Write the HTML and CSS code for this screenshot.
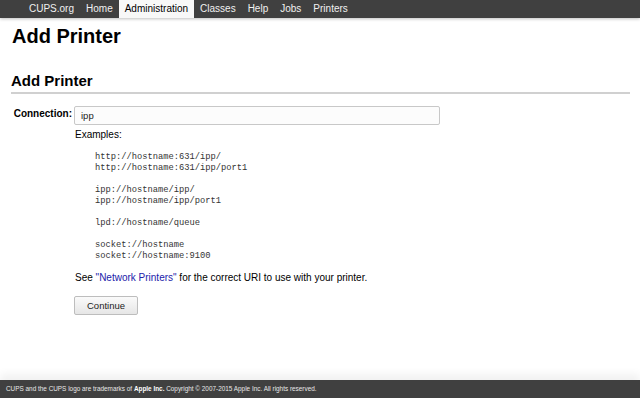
FILE: index.html
```html
<!DOCTYPE html>
<html>
<head>
<meta charset="utf-8">
<title>Add Printer - CUPS</title>
<link rel="stylesheet" href="styles.css">
</head>
<body>
<div class="page">
  <nav class="header">
    <ul class="nav">
      <li><a href="#">CUPS.org</a></li>
      <li><a href="#">Home</a></li>
      <li class="active"><a href="#">Administration</a></li>
      <li><a href="#">Classes</a></li>
      <li><a href="#">Help</a></li>
      <li><a href="#">Jobs</a></li>
      <li><a href="#">Printers</a></li>
    </ul>
  </nav>
  <main class="body">
    <h1 class="title">Add Printer</h1>
    <h2 class="section">Add Printer</h2>
    <div class="form">
      <div class="label">Connection:</div>
      <div class="field">
        <div class="input">ipp</div>
        <p class="examples">Examples:</p>
        <pre class="uris">http://hostname:631/ipp/
http://hostname:631/ipp/port1

ipp://hostname/ipp/
ipp://hostname/ipp/port1

lpd://hostname/queue

socket://hostname
socket://hostname:9100</pre>
        <p class="see">See <a href="#">"Network Printers"</a> for the correct URI to use with your printer.</p>
        <button class="button">Continue</button>
      </div>
    </div>
  </main>
  <footer class="footer">CUPS and the CUPS logo are trademarks of <b>Apple Inc.</b> Copyright © 2007-2015 Apple Inc. All rights reserved.</footer>
</div>
</body>
</html>
```
FILE: styles.css
```css
html, body {
  margin: 0;
  padding: 0;
  background: #fff;
}
body {
  font-family: "Liberation Sans", Arial, sans-serif;
  font-size: 10px;
  color: #000;
}
.page {
  display: flex;
  flex-direction: column;
  min-height: 100vh;
}
.header {
  background: #404040;
  height: 18px;
  box-shadow: 0 1px 3px rgba(0,0,0,0.25);
  position: relative;
  z-index: 1;
}
.nav {
  list-style: none;
  margin: 0;
  padding: 0 0 0 23px;
  display: flex;
  height: 18px;
}
.nav li a {
  display: block;
  height: 18px;
  line-height: 18px;
  padding: 0 6px;
  color: #f0f0f0;
  text-decoration: none;
  font-size: 10px;
}
.nav li.active a {
  background: #f8f8f8;
  color: #000;
}
.body {
  flex: 1;
  padding: 0 12px 0 12px;
}
.title {
  font-size: 20px;
  font-weight: bold;
  margin: 4px 0 0 0;
  line-height: 28px;
}
.section {
  font-size: 15px;
  font-weight: bold;
  margin: 22px -2px 0 -1px;
  padding: 0 0 2px 0;
  line-height: 18px;
  border-bottom: 2px solid #d0d0d0;
}
.form {
  display: flex;
  margin-top: 12px;
}
.label {
  width: 60px;
  text-align: right;
  font-weight: bold;
  padding-top: 2px;
  margin-left: 0;
}
.field {
  margin-left: 2px;
}
.input {
  width: 358px;
  height: 17px;
  border: 1px solid #c8c8c8;
  border-radius: 2px;
  background: #fcfcfc;
  padding: 0 0 0 6px;
  line-height: 18px;
  font-size: 9.5px;
  color: #222;
}
.examples {
  margin: 3px 0 0 1px;
  line-height: 14px;
}
.uris {
  font-family: "Liberation Mono", "Courier New", monospace;
  font-size: 8.75px;
  line-height: 11px;
  color: #333;
  margin: 10px 0 0 21px;
}
.see {
  margin: 9px 0 0 1px;
  line-height: 14px;
}
.see a {
  color: #2222aa;
  text-decoration: none;
}
.button {
  margin-top: 11px;
  width: 64px;
  height: 19px;
  font-family: "Liberation Sans", Arial, sans-serif;
  font-size: 9.5px;
  color: #222;
  background: linear-gradient(#fafafa, #e6e6e6);
  border: 1px solid #bdbdbd;
  border-radius: 2px;
  padding: 0;
}
.footer {
  background: #404040;
  color: #e8e8e8;
  height: 18px;
  line-height: 18px;
  font-size: 6.4px;
  padding-left: 6px;
  box-shadow: 0 -6px 8px rgba(0,0,0,0.06);
}
.footer b {
  color: #fff;
}
```
